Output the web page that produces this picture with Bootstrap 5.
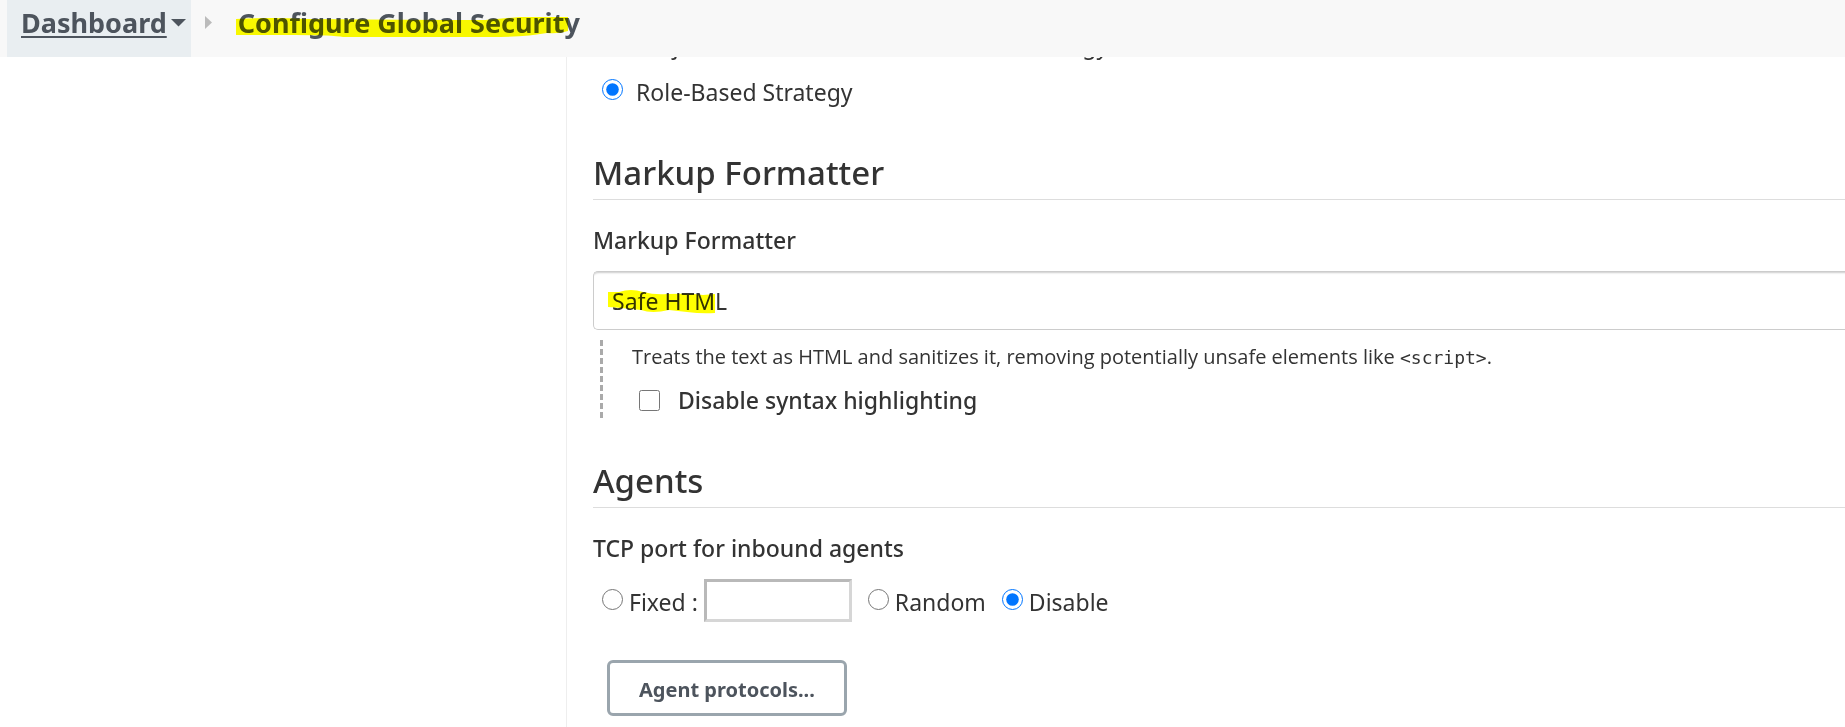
<!DOCTYPE html>
<html lang="en">
<head>
<meta charset="utf-8">
<meta name="viewport" content="width=device-width, initial-scale=1">
<title>Configure Global Security</title>
<link href="https://cdn.jsdelivr.net/npm/bootstrap@5.3.0/dist/css/bootstrap.min.css" rel="stylesheet">
<style>
  body { font-family: "Noto Sans", "Open Sans", sans-serif; font-size: 23px; line-height: 36px; color: #333; }

  /* Breadcrumb bar */
  .crumbs { background: #f8f8f8; height: 57px; padding-left: 7px; color: #4d545d; font-size: 27px; line-height: 46px; font-weight: 700; }
  .crumb-home { background: #e9eef1; padding: 0 4px 0 14px; gap: 4px; }
  .crumb-home a { color: inherit; text-underline-offset: 3px; text-decoration-thickness: 2px; }
  .crumb-arrow { margin: 16px 26px 0 14px; }
  .crumb-caret { margin-top: 15px; }

  /* Highlighter strokes lie over the text */
  .marker { position: absolute; mix-blend-mode: multiply; pointer-events: none; fill: #ff0; }
  .marker-page { left: -3px; top: 15px; }
  .marker-select { left: 14px; top: 18px; }

  /* Page body, scrolled beneath the bar */
  .side-panel { flex: 0 0 567px; border-right: 1px solid #eee; }
  .settings { padding-left: 26px; margin-top: -33px; min-width: 0; }
  .choice { padding-left: 9px; }
  .choice-label { padding-top: 3px; gap: 13px; }
  input[type=radio], input[type=checkbox] { width: 21px; height: 21px; margin: 0; flex: none; }
  input[type=radio] { margin-bottom: 2px; }
  .choice-label input[type=radio] { margin-bottom: 5px; }
  .section-title { font-size: 33px; line-height: 46px; font-weight: 500; border-bottom: 1px solid #ddd; margin: 40px 0 22px; padding-bottom: 3px; }
  .field-label { font-weight: 500; }
  .field-head { margin-bottom: 13px; }
  .formatter { appearance: none; height: 59px; border: 1px solid #ccc; border-right: 0; border-radius: 5px 0 0 5px; padding: 0 18px; background: #fff; color: inherit; box-shadow: inset 0 3px 2px -2px rgba(0,0,0,.2); }
  .nested { border-left: 3px dashed #aaa; margin: 10px 0 0 7px; padding-left: 29px; }
  .hint { font-family: "Open Sans", "Noto Sans", sans-serif; font-size: 20px; line-height: 34px; }
  .hint code { font-family: "DejaVu Sans Mono", monospace; font-size: 18px; color: inherit; }
  .syntax { margin-top: 7px; padding-left: 7px; gap: 18px; }
  .port-option { gap: 6px; }
  .port-option label { padding-top: 3px; }
  .port { width: 148px; height: 43px; border: 3px solid; border-color: #b9b9b9 #d6d6d6 #d6d6d6 #b9b9b9; }
  .btn-protocols { border: 3px solid #9aa5ad; border-radius: 6px; margin: 38px 0 0 14px; padding: 11px 29px 7px; font-size: 20px; line-height: 32px; font-weight: 700; color: #4d545d; }
</style>
</head>
<body class="vh-100 d-flex flex-column overflow-hidden">
<header class="crumbs d-flex flex-shrink-0 position-relative z-1">
  <div class="crumb-home d-flex">
    <a href="#">Dashboard</a>
    <svg class="crumb-caret" width="16" height="16" viewBox="0 0 16 16" aria-hidden="true"><path d="M0 4h15L7.500 11.500z" fill="#4d545d"/></svg>
  </div>
  <svg class="crumb-arrow" width="7" height="13" viewBox="0 0 7 13" aria-hidden="true"><path d="M0 0l7 6.500-7 6.500z" fill="#bbb"/></svg>
  <div class="position-relative">Configure Global Security
    <svg class="marker marker-page" width="333" height="24" viewBox="0 0 333 24" aria-hidden="true"><path d="M1 4Q40 2 70 4Q200 5 250 5L285 2L333 2V16Q324 19 312 18Q290 22 255 22H108Q98 20 60 20H1z"/></svg>
  </div>
</header>
<div class="d-flex flex-fill">
  <aside class="side-panel"></aside>
  <main class="settings flex-fill">
    <label class="choice choice-label d-flex align-items-center mb-2"><input type="radio" name="authz">Project-based Matrix Authorization Strategy</label>
    <label class="choice choice-label d-flex align-items-center"><input type="radio" name="authz" checked>Role-Based Strategy</label>

    <h2 class="section-title">Markup Formatter</h2>
    <label class="field-label field-head d-block" for="formatter">Markup Formatter</label>
    <div class="position-relative">
      <select id="formatter" class="formatter w-100 d-block"><option>Safe HTML</option></select>
      <svg class="marker marker-select" width="110" height="26" viewBox="0 0 110 26" aria-hidden="true"><path d="M1 3H12Q24-1 36 3Q48 6 60 5Q85 4 96 6L108 5V24Q95 25 80 23L62 21Q45 25 34 21Q15 19 1 18z"/></svg>
    </div>
    <div class="nested">
      <div class="hint">Treats the text as HTML and sanitizes it, removing potentially unsafe elements like <code>&lt;script&gt;</code>.</div>
      <label class="field-label syntax d-flex align-items-center"><input type="checkbox">Disable syntax highlighting</label>
    </div>

    <h2 class="section-title">Agents</h2>
    <div class="field-label field-head" id="port-head">TCP port for inbound agents</div>
    <div class="choice d-flex align-items-center gap-3" role="radiogroup" aria-labelledby="port-head">
      <div class="port-option d-flex align-items-center"><input type="radio" name="port" id="port-fixed"><label for="port-fixed">Fixed :</label><input class="port" type="text" aria-label="Fixed port"></div>
      <div class="port-option d-flex align-items-center"><input type="radio" name="port" id="port-random"><label for="port-random">Random</label></div>
      <div class="port-option d-flex align-items-center"><input type="radio" name="port" id="port-disable" checked><label for="port-disable">Disable</label></div>
    </div>
    <button type="button" class="btn btn-protocols">Agent protocols...</button>
  </main>
</div>
<script src="https://cdn.jsdelivr.net/npm/bootstrap@5.3.0/dist/js/bootstrap.bundle.min.js"></script>
</body>
</html>
